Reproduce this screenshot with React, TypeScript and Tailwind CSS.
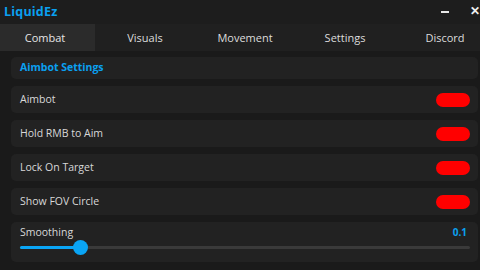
import { useState } from 'react';

const tabs = ['Combat', 'Visuals', 'Movement', 'Settings', 'Discord'];
const toggles = ['Aimbot', 'Hold RMB to Aim', 'Lock On Target', 'Show FOV Circle'];

export default function App() {
  const [active, setActive] = useState('Combat');
  const [smooth] = useState(0.1);

  return (
    <div
      className="w-[480px] h-[270px] overflow-hidden bg-[#1a1a1a] text-[#dcdcdc]"
      style={{ fontFamily: '"Open Sans", "Noto Sans", sans-serif' }}
    >
      {/* title bar */}
      <div className="h-[24px] bg-[#1d1d1d] flex items-center pl-[4px] relative">
        <span className="text-[12.5px] font-bold text-[#0aa0f0] tracking-[0.2px]">LiquidEz</span>
        <span className="absolute left-[441px] top-[11px] w-[8px] h-[1.5px] bg-[#e8e8e8]" />
        <span className="absolute left-[470px] top-[5px] text-[12px] leading-none text-[#f0f0f0] font-bold">✕</span>
      </div>

      {/* tabs */}
      <div className="h-[27px] bg-[#202020] flex -ml-[5px]">
        {tabs.map((t) => (
          <button
            key={t}
            onClick={() => setActive(t)}
            className={`w-[100px] shrink-0 text-[11px] pt-[2px] ${
              active === t ? 'bg-[#2b2b2b] text-[#e6e6e6]' : 'text-[#dcdcdc]'
            }`}
          >
            {t}
          </button>
        ))}
      </div>

      {/* content */}
      <div className="pl-[11px] pr-[2px] pt-[6px] flex flex-col gap-[7px]">
        <div className="h-[22px] rounded-[5px] bg-[#222222] flex items-center px-[9px]">
          <span className="text-[10.5px] font-bold text-[#0aa0f0]">Aimbot Settings</span>
        </div>

        {toggles.map((t) => (
          <div key={t} className="h-[27px] rounded-[5px] bg-[#222222] flex items-center justify-between pl-[9px] pr-[8px]">
            <span className="text-[10.5px] text-[#d8d8d8]">{t}</span>
            <span className="w-[34px] h-[14px] rounded-full bg-[#ff0000]" />
          </div>
        ))}

        <div className="h-[40px] rounded-[5px] bg-[#222222] pl-[9px] pr-[8px] pt-[3px]">
          <div className="flex items-center justify-between">
            <span className="text-[10.5px] text-[#d8d8d8]">Smoothing</span>
            <span className="text-[10px] font-bold text-[#0aa0f0] mr-[3px]">{smooth}</span>
          </div>
          <div className="relative h-[14px] -mt-[1px]">
            <div className="absolute left-0 right-0 top-[6px] h-[3px] rounded-full bg-[#3a3a3a]" />
            <div className="absolute left-0 w-[60px] top-[6px] h-[3px] rounded-full bg-[#0aa5f5]" />
            <div className="absolute left-[53px] top-0 w-[15px] h-[15px] rounded-full bg-[#0aa5f5]" />
          </div>
        </div>
      </div>
    </div>
  );
}
